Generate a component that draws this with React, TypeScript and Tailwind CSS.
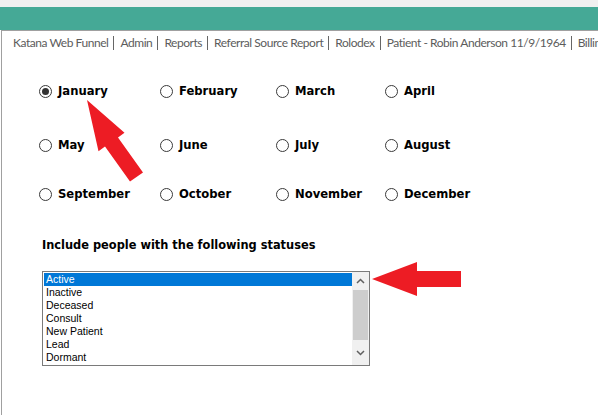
import React from 'react'

const navLinks = [
  'Katana Web Funnel',
  'Admin',
  'Reports',
  'Referral Source Report',
  'Rolodex',
  'Patient - Robin Anderson 11/9/1964',
  'Billing',
]

const monthRows = [
  ['January', 'February', 'March', 'April'],
  ['May', 'June', 'July', 'August'],
  ['September', 'October', 'November', 'December'],
]

const statuses = ['Active', 'Inactive', 'Deceased', 'Consult', 'New Patient', 'Lead', 'Dormant']

function Radio({ label, checked }: { label: string; checked?: boolean }) {
  return (
    <label className="flex items-center gap-[6px]">
      <span className="w-[13px] h-[13px] rounded-full border border-[#3a3a3a] bg-white flex items-center justify-center">
        {checked && <span className="w-[7px] h-[7px] rounded-full bg-[#333]" />}
      </span>
      <span className="font-bold text-[11.6px] leading-[14px] text-black">{label}</span>
    </label>
  )
}

export default function App() {
  return (
    <div className="relative w-[598px] h-[415px] bg-white overflow-hidden" style={{ fontFamily: '"DejaVu Sans", Verdana, sans-serif' }}>
      <div className="h-[7px] bg-[#f0f0f0]" />
      <div className="h-[23px] bg-[#45a996]" />

      <div className="ml-px h-[385px] border-t border-l border-[#a0a0a0]">
        {/* nav links */}
        <div
          className="flex items-center h-[22px] mt-[1px] pl-[11px] whitespace-nowrap overflow-hidden text-[12px] tracking-[-0.45px] text-[#5c5c5c]"
          style={{ fontFamily: 'Lato, "Noto Sans", sans-serif' }}
        >
          {navLinks.map((link, i) => (
            <React.Fragment key={link}>
              {i > 0 && <span className="shrink-0 w-px h-[14px] bg-[#666] ml-[5px] mr-[6px]" />}
              <span className="shrink-0">{link}</span>
            </React.Fragment>
          ))}
        </div>

        {/* months */}
        <div className="pl-[37px] pt-[30px]">
          {monthRows.map((row, r) => (
            <div key={r} className={`flex h-[14px] ${r === 1 ? 'mt-[40px]' : r === 2 ? 'mt-[35px]' : ''}`}>
              <div className="w-[121px]"><Radio label={row[0]} checked={row[0] === 'January'} /></div>
              <div className="w-[116px]"><Radio label={row[1]} /></div>
              <div className="w-[109px]"><Radio label={row[2]} /></div>
              <div><Radio label={row[3]} /></div>
            </div>
          ))}
        </div>

        {/* statuses */}
        <div className="pl-[40px] pt-[37px]">
          <div className="font-bold text-[11.4px] leading-[14px] text-black">Include people with the following statuses</div>
          <div className="mt-[19px] w-[328px] h-[95px] border border-[#7a7a7a] flex">
            <ul
              className="flex-1 pt-px pl-px text-[10.5px] text-black"
              style={{ fontFamily: '"Liberation Sans", Arial, sans-serif' }}
            >
              {statuses.map((s, i) => (
                <li
                  key={s}
                  className={`h-[13px] leading-[13px] pl-[2px] ${i === 0 ? 'bg-[#0078d7] text-white' : ''}`}
                >
                  {s}
                </li>
              ))}
            </ul>
            <div className="w-[17px] bg-[#f0f0f0] flex flex-col">
              <div className="h-[18px] flex items-center justify-center">
                <svg width="9" height="6" viewBox="0 0 9 6"><path d="M1 5 L4.5 1.5 L8 5" fill="none" stroke="#606060" strokeWidth="1.5" /></svg>
              </div>
              <div className="h-[50px] mx-px bg-[#cdcdcd]" />
              <div className="flex-1 flex items-center justify-center">
                <svg width="9" height="6" viewBox="0 0 9 6"><path d="M1 1 L4.5 4.5 L8 1" fill="none" stroke="#606060" strokeWidth="1.5" /></svg>
              </div>
            </div>
          </div>
        </div>
      </div>

      {/* red annotation arrows */}
      <svg className="absolute left-0 top-0 pointer-events-none" width="598" height="415" viewBox="0 0 598 415">
        <polygon
          fill="#ed1c24"
          points="87,100 124.5,132.7 118,137.4 143,172.4 130,181.6 105,146.6 98.5,151.3"
        />
        <polygon fill="#ed1c24" points="372,279 417,262 417,271 461,271 461,287 417,287 417,296" />
      </svg>
    </div>
  )
}
